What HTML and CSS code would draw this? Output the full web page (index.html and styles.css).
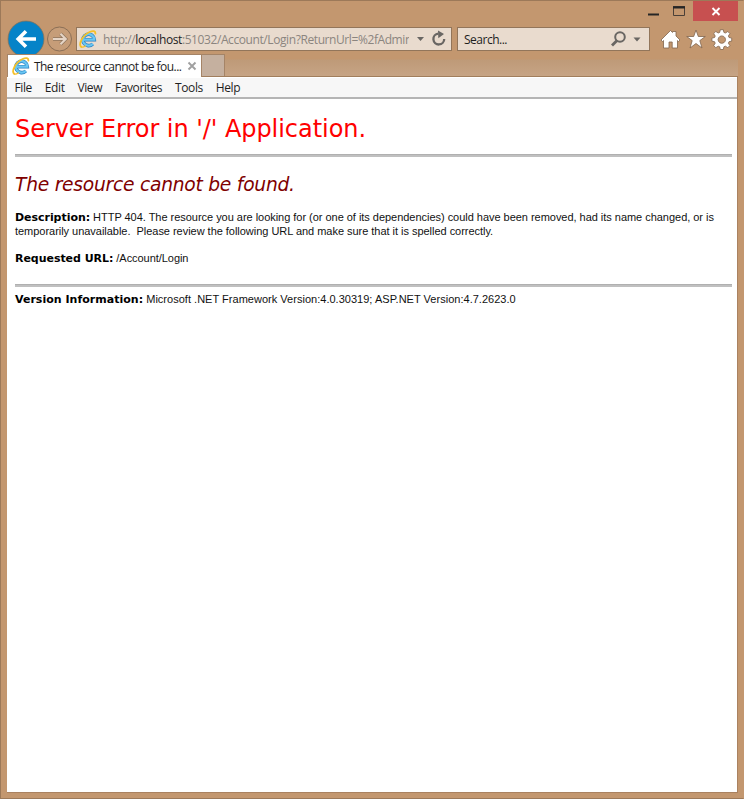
FILE: index.html
```html
<!DOCTYPE html>
<html lang="en">
<head>
<meta charset="utf-8">
<title>The resource cannot be found.</title>
<link rel="stylesheet" href="styles.css">
</head>
<body>
<svg width="0" height="0" class="defs">
  <defs>
    <symbol id="ie" viewBox="0 0 18 18">
      <path d="M13.700 13.900A5.700 5.700 0 1 1 15.300 9.700H6" fill="none" stroke="#2b7fbe" stroke-width="3.600"/>
      <path d="M13.900 13.700A5.700 5.700 0 1 1 15.300 9.700H5" fill="none" stroke="#68c6f3" stroke-width="2.200"/>
      <path d="M2.300 16.900C-1 14.500 3.500 5.200 10.600 2c3.600-1.600 6-1 5.800 1.700" fill="none" stroke="#f5c02a" stroke-width="1.800" stroke-linecap="round"/>
      <path d="M2.300 16.900c1.200.5 2.600 0 4-1" fill="none" stroke="#f5c02a" stroke-width="1.200" stroke-linecap="round"/>
    </symbol>
  </defs>
</svg>
<div class="window">
  <header class="titlebar">
    <svg class="minmax" width="44" height="20" viewBox="0 0 44 20"><path d="M5 13.500h11" stroke="#262626" stroke-width="2"/><path d="M30.500 6h11v8.500h-11z" fill="none" stroke="#4a4038"/><path d="M30 6.300h12" stroke="#262626" stroke-width="2.400"/></svg>
    <div class="close"><svg width="10" height="9" viewBox="0 0 10 9"><path d="M1.500 1l7 7M8.500 1l-7 7" stroke="#fff" stroke-width="1.900"/></svg></div>
  </header>
  <div class="toolbar">
    <svg class="nav" width="68" height="38" viewBox="0 0 68 38"><circle cx="19" cy="19" r="18" fill="#0583c8" stroke="#8d7050" stroke-width=".7"/><path d="M29 19H12M19 11.200 11.200 19l7.800 7.800" fill="none" stroke="#fff" stroke-width="3.600"/><circle cx="52.500" cy="19" r="12" fill="#c69d78" stroke="#8b6f56"/><path d="M46 19h12M53.500 13.800l5.200 5.200-5.200 5.200" fill="none" stroke="#8f755e" stroke-width="3.600"/><path d="M46 19h12M53.500 13.800l5.200 5.200-5.200 5.200" fill="none" stroke="#e5d4c5" stroke-width="2.200"/></svg>
    <div class="box address">
      <svg class="ie" width="18" height="18"><use href="#ie"/></svg>
      <span class="url">http://<b>localhost</b>:51032/Account/Login?ReturnUrl=%2fAdmin</span>
      <svg class="addr-icons" width="34" height="20" viewBox="0 0 34 20"><path d="M3 8h7l-3.500 4z" fill="#696663"/><path d="M24.300 4.700A5.400 5.400 0 1 0 30.200 10" fill="none" stroke="#696663" stroke-width="2.300"/><path d="M24 1.500 30 5l-5.700 4.200z" fill="#696663"/></svg>
    </div>
    <div class="box search">
      <span>Search...</span>
      <svg width="34" height="20" viewBox="0 0 34 20"><circle cx="12" cy="8" r="4.800" fill="none" stroke="#696663" stroke-width="2"/><path d="M9 11.500 4 16.500" stroke="#696663" stroke-width="2.800"/><path d="M25.500 8.500h7L29 12.500z" fill="#696663"/></svg>
    </div>
    <svg class="tools" width="74" height="24" viewBox="0 0 74 24"><g fill="#fff" stroke="#80654e" stroke-width=".8"><path d="M1 13 10.500 3.500l2 2V4.500H16V9l4 4-1.500 1.500-1-1V21h-5.300v-6H9v6H3.500v-7.500l-1 1z"/><path d="m36 3 2.300 6.500h7l-5.500 4.100L42 21l-6-4.500L30 21l2.200-7.400-5.500-4.100h7z"/><path fill-rule="evenodd" d="m60.300 2.700h3l.6 2.700 1.500.6 2.400-1.500 2.100 2.100-1.500 2.400.6 1.500 2.700.6v3l-2.700.6-.6 1.500 1.500 2.400-2.100 2.100-2.400-1.500-1.500.6-.6 2.700h-3l-.6-2.700-1.500-.6-2.400 1.500-2.100-2.100 1.500-2.400-.6-1.500-2.700-.6v-3l2.700-.6.6-1.500-1.500-2.400 2.100-2.100 2.400 1.500 1.500-.6zM61.800 8.900a3.700 3.700 0 1 0 .01 0z"/></g></svg>
  </div>
  <div class="tabs">
    <div class="tab"><svg class="ie" width="18" height="18"><use href="#ie"/></svg><span class="tab-title">The resource cannot be fou...</span><svg width="10" height="10" viewBox="0 0 10 10"><path d="m1.500 1.500 7 7m0-7-7 7" stroke="#a0a0a0" stroke-width="1.900"/></svg></div>
    <div class="newtab"></div>
  </div>
  <div class="client">
    <nav class="menu"><span>File</span><span>Edit</span><span>View</span><span>Favorites</span><span>Tools</span><span>Help</span></nav>
    <main>
      <h1>Server Error in '/' Application.</h1>
      <hr>
      <h2>The resource cannot be found.</h2>
      <p class="desc"><b>Description:</b> <span>HTTP 404. The resource you are looking for (or one of its dependencies) could have been removed, had its name changed, or is<br>temporarily unavailable.&nbsp; Please review the following URL and make sure that it is spelled correctly.</span></p>
      <p class="req"><b>Requested URL:</b> <span>/Account/Login</span></p>
      <hr>
      <p class="ver"><b>Version Information:</b> <span>Microsoft .NET Framework Version:4.0.30319; ASP.NET Version:4.7.2623.0</span></p>
    </main>
  </div>
</div>
</body>
</html>
```
FILE: styles.css
```css
* { box-sizing: border-box; }
body { margin: 0; }
.defs { display: block; }
.window {
  width: 744px; height: 799px;
  display: flex; flex-direction: column;
  background: #c3976f;
  border: 1px solid #9c7959;
  border-right-color: #c3976f;
  padding: 0 5px 5px 6px;
  font: 12px "Open Sans", "Noto Sans", sans-serif;
  color: #1e1e1e;
}
.titlebar { height: 20px; display: flex; justify-content: flex-end; }
.close { width: 45px; height: 20px; margin-left: 6px; background: #c75050; display: flex; align-items: center; justify-content: center; }
.toolbar { height: 33px; display: flex; padding-top: 6px; flex: none; }
.nav { margin: -7px 1px 0 0; flex: none; }
.box { height: 24px; border: 1px solid #92755a; background: #e9dbce; display: flex; align-items: center; }
.address { width: 376px; margin-right: 5px; padding-left: 2px; }
.ie { flex: none; }
.url { width: 306px; overflow: hidden; white-space: nowrap; margin-left: 6px; color: #8b857f; letter-spacing: -.41px; }
.url b { font-weight: 400; color: #222; }
.addr-icons { margin-left: 5px; flex: none; }
.search { width: 193px; justify-content: space-between; padding: 0 7px 0 6px; letter-spacing: -.5px; }
.tools { margin-left: 10px; flex: none; }
.tabs { height: 23px; flex: none; display: flex; background: linear-gradient(#c3976f 0, #c3976f 5px, #be9a78 6px, #c6a485 22px); border-bottom: 1px solid #a17e5d; }
.tab { width: 195px; height: 23px; background: #fff; border: 1px solid #a58467; border-bottom: 0; display: flex; align-items: center; padding-left: 4px; }
.tab-title { width: 153px; white-space: nowrap; margin-left: 4px; letter-spacing: -.55px; }
.newtab { width: 23px; height: 22px; background: #c5b09f; border: 1px solid #a58467; border-left: 0; border-bottom: 0; }
.client { flex: 1; background: #fff; border: solid #aa8260; border-width: 0 1px 1px 0; }
.menu { height: 22px; background: #f7f7f7; border-top: 1px solid #fff; border-bottom: 2px solid #b5b5b5; display: flex; align-items: center; gap: 12.800px; padding-left: 7.500px; letter-spacing: -.38px; }
main { padding: 16px 5px 0 8px; font: 11px/14px "Liberation Sans", Arial, sans-serif; color: #111; }
h1, h2 { font-family: "DejaVu Sans", Verdana, sans-serif; font-weight: 400; white-space: nowrap; margin: 0; }
h1 { font-size: 24px; line-height: 28px; color: #f00; letter-spacing: -.05px; }
hr { border: 0; height: 3px; margin: 11px 0 0; background: #c0c0c0; border-top: 1px solid #b0b0b0; }
h2 { font-size: 18.670px; line-height: 24px; margin-top: 16px; color: #800000; font-style: italic; letter-spacing: -.24px; }
p { margin: 0; white-space: nowrap; }
p b { font: bold 11px/0 "DejaVu Sans", Verdana, sans-serif; color: #000; letter-spacing: -.04px; }
.desc { margin-top: 13px; letter-spacing: -.03px; }
.req { margin-top: 13px; letter-spacing: -.05px; }
.req + hr { margin-top: 19px; }
.ver { margin-top: 5px; letter-spacing: .02px; }
.ver b { letter-spacing: .02px; }
```
